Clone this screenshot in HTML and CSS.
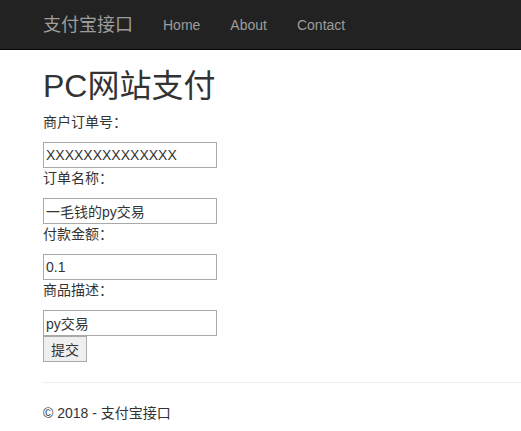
FILE: index.html
```html
<!DOCTYPE html>
<html>
<head>
<meta charset="utf-8">
<title>PC网站支付</title>
<link rel="stylesheet" href="styles.css">
</head>
<body>
<nav class="navbar">
  <div class="nav-inner">
    <a class="brand" href="#">支付宝接口</a>
    <ul class="nav-links">
      <li><a href="#">Home</a></li>
      <li><a href="#">About</a></li>
      <li><a href="#">Contact</a></li>
    </ul>
  </div>
</nav>
<main class="content">
  <h2 class="title">PC网站支付</h2>
  <form class="pay-form">
    <p class="field-label">商户订单号：</p>
    <input class="field" type="text" value="XXXXXXXXXXXXXX">
    <p class="field-label">订单名称：</p>
    <input class="field" type="text" value="一毛钱的py交易">
    <p class="field-label">付款金额：</p>
    <input class="field" type="text" value="0.1">
    <p class="field-label">商品描述：</p>
    <input class="field" type="text" value="py交易">
    <div><button class="submit" type="button">提交</button></div>
  </form>
  <hr class="divider">
  <footer class="footer">
    <p>© 2018 - 支付宝接口</p>
  </footer>
</main>
</body>
</html>
```
FILE: styles.css
```css
html, body {
  margin: 0;
  padding: 0;
}
body {
  font-family: "Liberation Sans", Arial, "Noto Sans CJK SC", sans-serif;
  font-size: 14px;
  line-height: 20px;
  color: #333;
  background: #fff;
}
.navbar {
  background: #222;
  border-bottom: 1px solid #080808;
  height: 49px;
}
.nav-inner {
  display: flex;
  align-items: center;
  height: 49px;
  padding-left: 43px;
}
.brand {
  color: #9d9d9d;
  font-size: 18px;
  line-height: 20px;
  text-decoration: none;
  margin-right: 15px;
}
.nav-links {
  display: flex;
  list-style: none;
  margin: 0;
  padding: 0;
}
.nav-links a {
  display: block;
  color: #9d9d9d;
  text-decoration: none;
  padding: 0 15px;
  line-height: 20px;
}
.content {
  padding: 0 0 0 43px;
}
.title {
  font-size: 32px;
  font-weight: 400;
  line-height: 36px;
  margin: 18px 0 8px;
}
.pay-form {
  margin: 0;
}
.field-label {
  margin: 0 0 10px;
}
.field {
  display: block;
  box-sizing: border-box;
  width: 174px;
  height: 26px;
  margin: 0;
  padding: 1px 2px;
  border: 1px solid #a9a9a9;
  font-family: inherit;
  font-size: 14px;
  color: #333;
  background: #fff;
}
.submit {
  display: block;
  box-sizing: border-box;
  height: 26px;
  width: 44px;
  margin: 0;
  padding: 0 6px;
  font-family: inherit;
  font-size: 14px;
  color: #333;
  background: #efefef;
  border: 1px solid #a9a9a9;
  border-radius: 0;
}
.divider {
  margin: 20px 0 0;
  border: 0;
  border-top: 1px solid #eee;
}
.footer p {
  margin: 20px 0 0;
}
```
